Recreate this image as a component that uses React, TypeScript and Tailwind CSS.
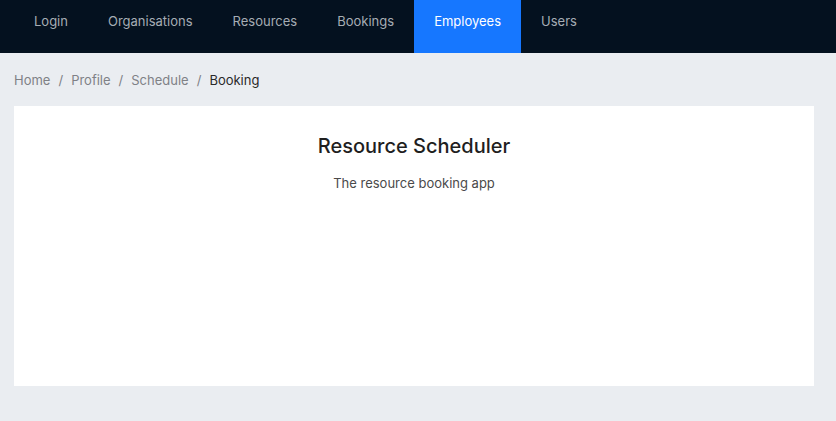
import React from 'react'

const navItems = ['Login', 'Organisations', 'Resources', 'Bookings', 'Employees', 'Users']
const crumbs = ['Home', 'Profile', 'Schedule']

export default function App() {
  const active = 'Employees'

  return (
    <div className="min-h-screen bg-[#eaedf1] font-['Inter',sans-serif] text-[13px]">
      <header className="flex h-[53px] bg-[#04111f] pl-[14px]">
        {navItems.map((item) => (
          <a
            key={item}
            href="#"
            className={
              item === active
                ? 'bg-[#1677ff] px-5 pt-[11px] leading-5 text-white'
                : 'px-5 pt-[11px] leading-5 text-[#a6adb4]'
            }
          >
            {item}
          </a>
        ))}
      </header>

      <main className="pb-[35px] pl-[14px] pr-[22px]">
        <nav className="flex h-[53px] items-center gap-2 pt-[2px] text-[#7f8186]">
          {crumbs.map((c) => (
            <React.Fragment key={c}>
              <span>{c}</span>
              <span>/</span>
            </React.Fragment>
          ))}
          <span className="text-[#2a2a2a]">Booking</span>
        </nav>

        <section className="h-[280px] bg-white pt-[26px] text-center">
          <h1 className="text-xl font-medium leading-7 text-[#1f1f1f]">Resource Scheduler</h1>
          <p className="mt-[14px] text-[#4a4a4a]">The resource booking app</p>
        </section>
      </main>
    </div>
  )
}
